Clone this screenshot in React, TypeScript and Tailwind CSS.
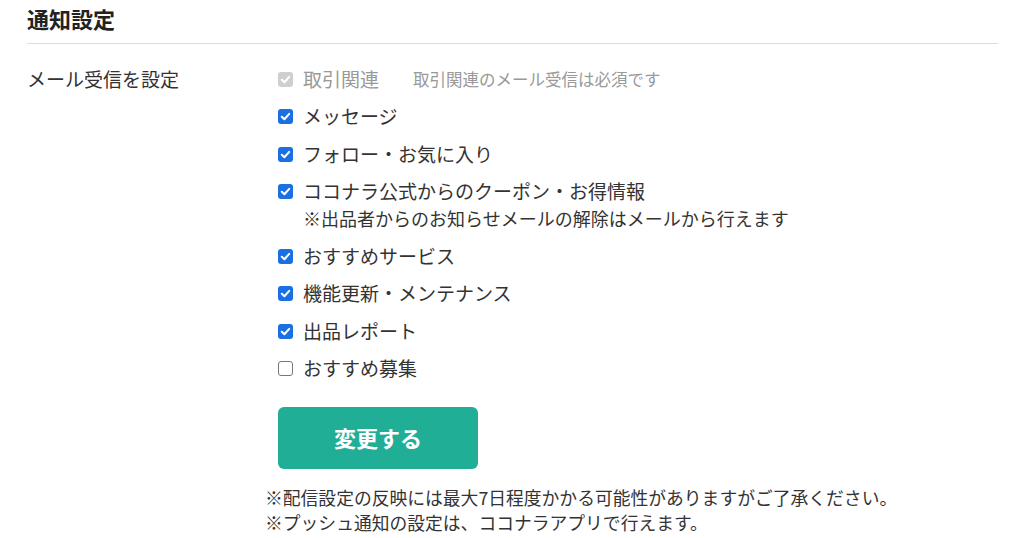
import React, { useState } from 'react';

const FONT = { fontFamily: '"Noto Sans CJK JP", "Noto Sans", sans-serif' };

interface Option {
  id: string;
  label: string;
  note?: string;
  checked: boolean;
}

const initialOptions: Option[] = [
  { id: 'message', label: 'メッセージ', checked: true },
  { id: 'follow', label: 'フォロー・お気に入り', checked: true },
  {
    id: 'coupon',
    label: 'ココナラ公式からのクーポン・お得情報',
    note: '※出品者からのお知らせメールの解除はメールから行えます',
    checked: true,
  },
  { id: 'recommend', label: 'おすすめサービス', checked: true },
  { id: 'update', label: '機能更新・メンテナンス', checked: true },
  { id: 'report', label: '出品レポート', checked: true },
  { id: 'recruit', label: 'おすすめ募集', checked: false },
];

const Box: React.FC<{ checked: boolean; disabled?: boolean }> = ({ checked, disabled }) => {
  if (!checked) {
    return <span className="block w-[15px] h-[15px] rounded-[3px] border border-[#767676] bg-white shrink-0" />;
  }
  return (
    <span
      className={`flex items-center justify-center w-[15px] h-[15px] rounded-[3px] shrink-0 ${
        disabled ? 'bg-[#cfcfcf]' : 'bg-[#1a6fe3]'
      }`}
    >
      <svg viewBox="0 0 14 14" className="w-[13px] h-[13px]">
        <path d="M3 7.3 L5.8 10 L11 4.2" fill="none" stroke="white" strokeWidth="2.2" strokeLinecap="round" strokeLinejoin="round" />
      </svg>
    </span>
  );
};

export default function App() {
  const [options, setOptions] = useState(initialOptions);

  const toggle = (id: string) =>
    setOptions((prev) => prev.map((o) => (o.id === id ? { ...o, checked: !o.checked } : o)));

  return (
    <div className="w-[1024px] h-[538px] bg-white text-[#333] overflow-hidden" style={FONT}>
      <div className="pl-[27px] pr-[26px]">
        <h2 className="h-[43px] pt-[3px] text-[22px] font-bold leading-[30px] text-[#222]">通知設定</h2>
        <div className="h-px bg-[#dcdcdc]" />
      </div>

      <div className="flex pl-[27px] pt-[20px]">
        <div className="w-[251px] text-[19px] leading-[30px] text-[#333]">メール受信を設定</div>

        <div className="flex flex-col">
          <div className="flex items-center h-[30px]">
            <Box checked disabled />
            <span className="ml-[10px] text-[19px] text-[#999]">取引関連</span>
            <span className="ml-[34px] text-[16.5px] text-[#999]">取引関連のメール受信は必須です</span>
          </div>

          {options.map((o) => (
            <div key={o.id} className="mt-[7.5px]">
              <label className="flex items-center h-[30px] cursor-pointer" onClick={() => toggle(o.id)}>
                <Box checked={o.checked} />
                <span className="ml-[10px] text-[19px] text-[#333]">{o.label}</span>
              </label>
              {o.note && (
                <div className="pl-[25px] text-[18px] leading-[24px] -mt-[1px] mb-[4px] text-[#333]">{o.note}</div>
              )}
            </div>
          ))}

          <button className="mt-[23px] w-[200px] h-[62px] rounded-[6px] bg-[#20ae97] text-white text-[22px] font-bold">
            変更する
          </button>
        </div>
      </div>

      <div className="pl-[265px] pt-[16px] text-[17.8px] leading-[25px] text-[#333]">
        <p>※配信設定の反映には最大7日程度かかる可能性がありますがご了承ください。</p>
        <p>※プッシュ通知の設定は、ココナラアプリで行えます。</p>
      </div>
    </div>
  );
}
